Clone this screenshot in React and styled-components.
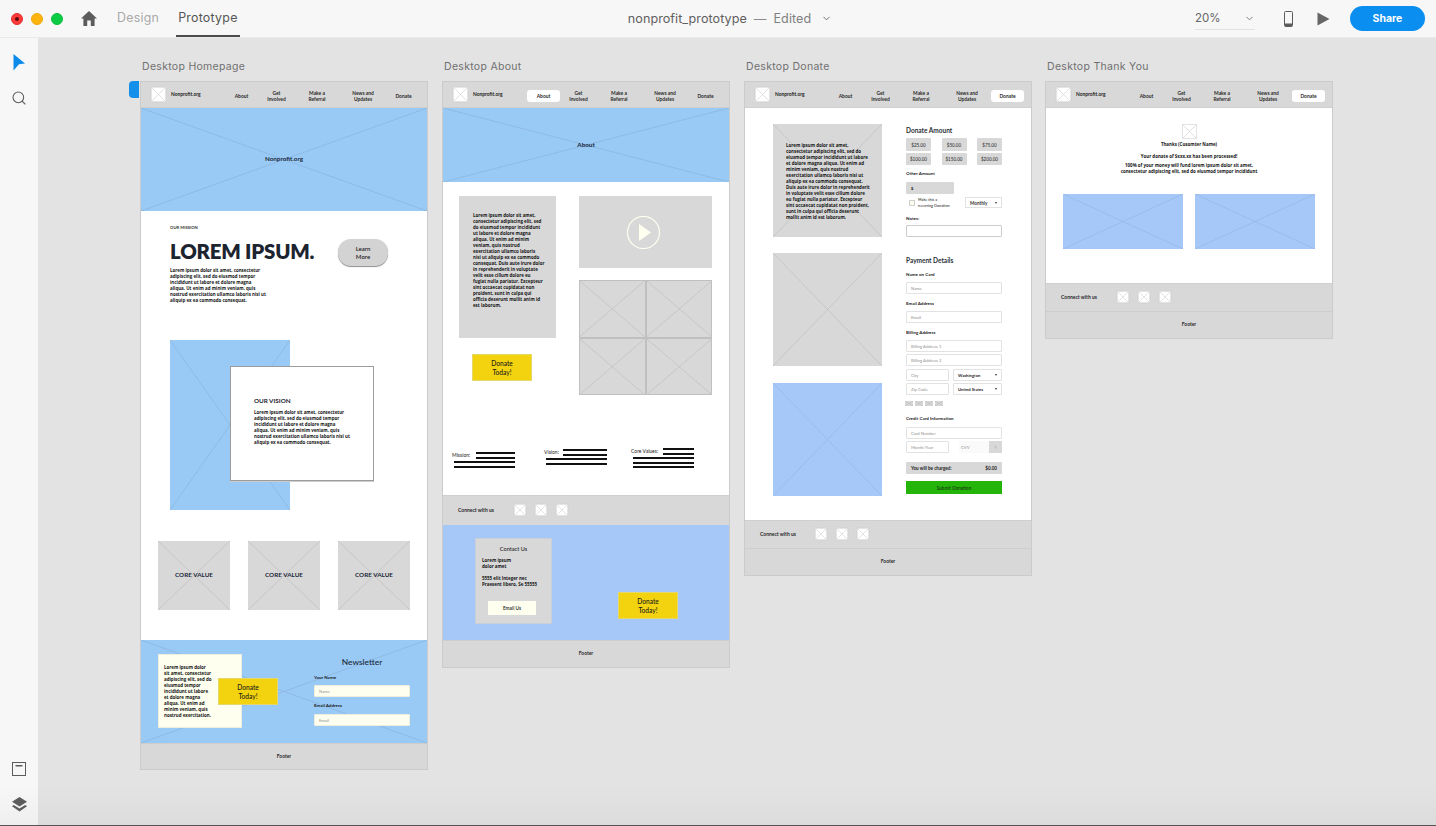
import styled, { createGlobalStyle } from "styled-components"
import { ChevronDown, Search } from "lucide-react"

const GlobalStyle = createGlobalStyle`
    html, body {
        margin: 0;
        padding: 0;
        background: #e3e3e3;
        overflow: hidden;
    }
    * {
        box-sizing: border-box;
    }
`;

const LOREM_BODY = "\"Open Sans\", \"Liberation Sans\", sans-serif";
const WIRE_FONT = "Lato, \"Open Sans\", sans-serif";
const UI_FONT = "Inter, \"Noto Sans\", sans-serif";

const SKY = "#99c9f5";
const PERIWINKLE = "#a6c8f8";
const GREY = "#d8d8d8";
const CREAM = "#fffff0";
const SKY_LINE = "#8ab4dc";
const PERI_LINE = "#96b6e0";
const THUMB_LINE = "#d5d5d5";

const Page = styled.div`
    width: 1436px;
    height: 826px;
    display: grid;
    grid-template-columns: 38px 1fr;
    grid-template-rows: 38px 1fr;
    font-family: ${WIRE_FONT};
    border-bottom: 1px solid #555;
    overflow: hidden;
`;

/* top bar */
const TopBar = styled.header`
    grid-column: 1 / 3;
    display: grid;
    grid-template-columns: 1fr auto 1fr;
    align-items: center;
    background: #f7f7f7;
    font-family: ${UI_FONT};
    border-bottom: 1px solid #e9e9e9;
`;
const TopLeft = styled.div`
    display: flex;
    align-items: center;
    height: 100%;
    padding-left: 11px;
`;
const Dot = styled.span`
    width: 12px;
    height: 12px;
    border-radius: 50%;
    margin-right: 8px;
    background: ${(p) => p.$color};
    border: 1px solid ${(p) => p.$edge};
    display: flex;
    align-items: center;
    justify-content: center;
`;
const DotCore = styled.span`
    width: 4px;
    height: 4px;
    border-radius: 50%;
    background: #5a0a0a;
`;
const HomeIcon = styled.svg`
    width: 16px;
    height: 15px;
    margin-left: 10px;
    fill: #5c5c5c;
`;
const Tab = styled.div`
    height: 100%;
    display: flex;
    align-items: center;
    font-size: 12.4px;
    letter-spacing: 0.25px;
    padding: 0 2px;
    color: ${(p) => (p.$active ? "#555" : "#a9a9a9")};
    margin-left: ${(p) => p.$ml}px;
    border-bottom: 2px solid ${(p) => (p.$active ? "#4b4b4b" : "transparent")};
`;
const DocTitle = styled.div`
    display: flex;
    align-items: center;
    font-size: 12.6px;
    letter-spacing: 0.05px;
    color: #5f5f5f;
    margin-left: 24px;
    white-space: nowrap;
`;
const DocDash = styled.span`
    margin: 0 7px;
    color: #8a8a8a;
`;
const DocState = styled.span`
    color: #808080;
    margin-right: 10px;
`;
const TopRight = styled.div`
    display: flex;
    align-items: center;
    justify-content: flex-end;
    padding-right: 11px;
`;
const ZoomSelect = styled.div`
    width: 60px;
    height: 23px;
    margin-right: 28px;
    display: flex;
    align-items: center;
    justify-content: space-between;
    font-size: 11.5px;
    color: #666;
    border-bottom: 1px solid #e2e2e2;
`;
const PhoneIcon = styled.svg`
    width: 11px;
    height: 16px;
    margin-right: 23px;
`;
const PlayIcon = styled.svg`
    width: 13px;
    height: 14px;
    margin-right: 20px;
    fill: #666;
`;
const ShareButton = styled.button`
    width: 75px;
    height: 25px;
    border: none;
    border-radius: 13px;
    background: #0a8ef0;
    color: #fff;
    font-family: ${UI_FONT};
    font-size: 10.5px;
    font-weight: 700;
`;

/* side rail */
const Rail = styled.aside`
    display: flex;
    flex-direction: column;
    align-items: center;
    background: linear-gradient(#f7f7f7 95%, #efefef);
    padding-top: 16px;
    padding-bottom: 13px;
`;
const RailGap = styled.div`
    flex: 1;
`;
const RailIcon = styled.svg`
    display: block;
    margin-top: ${(p) => p.$mt || 0}px;
`;

/* canvas */
const Canvas = styled.main`
    display: flex;
    align-items: flex-start;
    gap: 14px;
    padding: 22px 0 0 102px;
    background: linear-gradient(#e3e3e3 95%, #dcdcdc);
    overflow: hidden;
`;
const BoardColumn = styled.section`
    position: relative;
    width: 288px;
    flex: none;
    margin-left: ${(p) => p.$shift || 0}px;
`;
const BoardTitle = styled.div`
    height: 13px;
    line-height: 13px;
    margin-bottom: 8px;
    padding-left: 2px;
    font-family: ${UI_FONT};
    font-size: 10.5px;
    letter-spacing: 0.3px;
    color: #707070;
    white-space: nowrap;
`;
const Board = styled.div`
    display: flex;
    flex-direction: column;
    border: 1px solid #cbcbcb;
    background: #fff;
`;
const SelectTab = styled.div`
    position: absolute;
    left: -11px;
    top: 21px;
    width: 10px;
    height: 17px;
    background: #1590ea;
    border-radius: 4px 0 0 4px;
`;

/* wireframe shared */
const Frame = styled.div`
    position: relative;
    flex: none;
    overflow: hidden;
    width: ${(p) => (p.$w ? `${p.$w}px` : "auto")};
    height: ${(p) => p.$h}px;
    background: ${(p) => p.$bg || GREY};
    margin-top: ${(p) => p.$mt || 0}px;
`;
const CrossSvg = styled.svg`
    position: absolute;
    inset: 0;
    width: 100%;
    height: 100%;
    pointer-events: none;
`;
function Cross({ color = "#c0c0c0" }) {
    return (
        <CrossSvg viewBox="0 0 100 100" preserveAspectRatio="none">
            <line x1="0" y1="0" x2="100" y2="100" stroke={color} strokeWidth="0.7" vectorEffect="non-scaling-stroke" />
            <line x1="100" y1="0" x2="0" y2="100" stroke={color} strokeWidth="0.7" vectorEffect="non-scaling-stroke" />
        </CrossSvg>
    );
}
const Thumb = styled.div`
    position: relative;
    flex: none;
    width: ${(p) => p.$size || 12}px;
    height: ${(p) => p.$size || 12}px;
    background: #fff;
    border: 1px solid #e4e4e4;
    border-radius: 1px;
    box-shadow: 0 0 1px rgba(0, 0, 0, 0.15);
`;
const Copy = styled.p`
    position: relative;
    margin: ${(p) => p.$mt || 0}px 0 0;
    font-family: ${LOREM_BODY};
    font-size: 4.45px;
    line-height: 6px;
    font-weight: 700;
    color: #151515;
    white-space: nowrap;
    text-align: ${(p) => p.$align || "left"};
`;
const YellowButton = styled.div`
    position: ${(p) => (p.$over ? "absolute" : "relative")};
    left: ${(p) => (p.$over ? "59px" : "auto")};
    top: ${(p) => (p.$over ? "23px" : "auto")};
    flex: none;
    width: 60px;
    height: 27px;
    display: flex;
    align-items: center;
    justify-content: center;
    text-align: center;
    background: #f3d20f;
    border: 1px solid #e5d86b;
    font-size: 6.6px;
    line-height: 8.3px;
    font-weight: 500;
    color: #1a1a1a;
    margin: ${(p) => p.$margin || "0"};
`;

/* nav */
const Nav = styled.nav`
    display: flex;
    align-items: center;
    height: 26px;
    padding-left: 10px;
    background: ${GREY};
    border-bottom: 1px solid #cfcfcf;
`;
const Brand = styled.div`
    width: 54px;
    margin-left: 5px;
    margin-top: -2px;
    font-size: 4.9px;
    font-weight: 700;
    color: #222;
`;
const NavLink = styled.div`
    flex: none;
    width: ${(p) => p.$w}px;
    height: 12px;
    margin-top: 2px;
    display: flex;
    align-items: center;
    justify-content: center;
    text-align: center;
    font-size: 4.9px;
    line-height: 6px;
    font-weight: 700;
    color: #2a2a2a;
    background: ${(p) => (p.$active ? "#fff" : "transparent")};
    border-radius: 3px;
`;
const links = [
    { key: "about", w: 33, label: "About" },
    { key: "involved", w: 37, label: <>Get<br />Involved</> },
    { key: "referral", w: 44, label: <>Make a<br />Referral</> },
    { key: "news", w: 48, label: <>News and<br />Updates</> },
    { key: "donate", w: 33, label: "Donate" },
];
function TopNav({ active }) {
    return (
        <Nav>
            <Thumb $size={15}><Cross color={THUMB_LINE} /></Thumb>
            <Brand>Nonprofit.org</Brand>
            {links.map((l) => (
                <NavLink key={l.key} $w={l.w} $active={active === l.key}>
                    <span>{l.label}</span>
                </NavLink>
            ))}
        </Nav>
    );
}
const HeroText = styled.div`
    position: absolute;
    inset: 0 0 2px 0;
    display: flex;
    align-items: center;
    justify-content: center;
    font-size: 6.3px;
    font-weight: 700;
    color: #1b2a3a;
`;
const FooterBar = styled.footer`
    height: ${(p) => p.$h || 26}px;
    padding-bottom: 2px;
    display: flex;
    align-items: center;
    justify-content: center;
    background: ${GREY};
    border-top: 1px solid #cdcdcd;
    font-size: 4.9px;
    font-weight: 700;
    color: #2a2a2a;
`;
const ConnectBar = styled.div`
    display: flex;
    align-items: center;
    height: ${(p) => p.$h}px;
    padding: 0 0 1px 15px;
    background: ${GREY};
    border-top: 1px solid #cfcfcf;
`;
const ConnectLabel = styled.div`
    width: ${(p) => p.$w || 56}px;
    font-size: 5px;
    font-weight: 700;
    color: #2a2a2a;
`;
const ConnectIcons = styled.div`
    display: flex;
    gap: 9px;
`;
function Connect({ h, w }) {
    return (
        <ConnectBar $h={h}>
            <ConnectLabel $w={w}>Connect with us</ConnectLabel>
            <ConnectIcons>
                <Thumb><Cross color={THUMB_LINE} /></Thumb>
                <Thumb><Cross color={THUMB_LINE} /></Thumb>
                <Thumb><Cross color={THUMB_LINE} /></Thumb>
            </ConnectIcons>
        </ConnectBar>
    );
}

/* homepage */
const Mission = styled.div`
    padding: 14px 0 0 29px;
    height: 93px;
`;
const Eyebrow = styled.div`
    font-size: 4.2px;
    line-height: 6px;
    font-weight: 700;
    color: #333;
`;
const TitleRow = styled.div`
    display: flex;
    align-items: center;
    margin-top: 8px;
    height: 27px;
`;
const BigTitle = styled.h1`
    width: 168px;
    margin: -4px 0 0;
    font-size: 20.4px;
    line-height: 26px;
    font-weight: 800;
    letter-spacing: -0.2px;
    color: #1c2430;
    white-space: nowrap;
`;
const LearnButton = styled.div`
    width: 50px;
    height: 27px;
    display: flex;
    align-items: center;
    justify-content: center;
    text-align: center;
    border-radius: 13px;
    background: #d3d3d3;
    box-shadow: 0 1px 1px #8f8f8f;
    font-size: 6px;
    line-height: 8px;
    font-weight: 600;
    color: #222;
`;
const VisionBlock = styled.div`
    position: relative;
    width: 120px;
    margin: 36px 0 0 29px;
`;
const VisionCard = styled.div`
    position: absolute;
    left: 60px;
    top: 26px;
    width: 144px;
    height: 115px;
    padding: 30px 0 0 23px;
    background: #fff;
    border: 1px solid #9c9c9c;
    box-shadow: 0 1px 0 #ccc;
`;
const VisionTitle = styled.div`
    font-size: 6.3px;
    line-height: 8px;
    font-weight: 700;
    color: #1c2430;
`;
const CoreRow = styled.div`
    display: flex;
    gap: 18px;
    margin: 31px 0 30px;
    padding-left: 17px;
`;
const Newsletter = styled.div`
    display: flex;
    align-items: flex-start;
    padding: 14px 0 0 17px;
    height: 103px;
`;
const CreamCard = styled.div`
    position: relative;
    width: 84px;
    height: 74px;
    padding: 9px 0 0 5px;
    background: ${CREAM};
    border: 1px solid #eeeede;
`;
const FormColumn = styled.div`
    position: relative;
    width: 96px;
    margin-left: 72px;
`;
const NewsTitle = styled.div`
    height: 16px;
    line-height: 16px;
    text-align: center;
    font-size: 8.4px;
    font-weight: 500;
    color: #1b2a3a;
`;
const FieldLabel = styled.div`
    margin-top: ${(p) => p.$mt || 0}px;
    height: 6px;
    line-height: 7.5px;
    font-size: 4.5px;
    font-weight: 700;
    color: #1b1b1b;
    white-space: nowrap;
`;
const Input = styled.div`
    width: ${(p) => (p.$w ? `${p.$w}px` : "100%")};
    height: 12px;
    margin-top: ${(p) => p.$mt || 0}px;
    padding-left: 4px;
    display: flex;
    align-items: center;
    justify-content: ${(p) => (p.$select ? "space-between" : "flex-start")};
    background: ${(p) => p.$bg || "#fff"};
    border: 1px solid ${(p) => p.$edge || "#e2e2e2"};
    border-radius: 1px;
    font-size: 4.2px;
    font-weight: ${(p) => (p.$select ? 700 : 400)};
    color: ${(p) => (p.$select ? "#222" : "#8f8f8f")};
    white-space: nowrap;
`;
const Caret = styled.span`
    width: 0;
    height: 0;
    margin-right: 4px;
    border-left: 1.5px solid transparent;
    border-right: 1.5px solid transparent;
    border-top: 2px solid #333;
`;

/* about */
const AboutColumns = styled.div`
    display: flex;
    padding: 14px 0 0 16px;
`;
const AboutLeft = styled.div`
    width: 97px;
`;
const AboutRight = styled.div`
    width: 133px;
    margin-left: 23px;
`;
const TextPanel = styled.div`
    height: 142px;
    padding: 16px 0 0 14px;
    background: ${GREY};
`;
const PlayBadge = styled.svg`
    position: absolute;
    left: 47px;
    top: 20px;
    width: 35px;
    height: 33px;
`;
const QuadGrid = styled.div`
    display: grid;
    grid-template-columns: 1fr 1fr;
    grid-template-rows: 1fr 1fr;
    height: 115px;
    margin-top: 12px;
`;
const QuadCell = styled.div`
    position: relative;
    background: ${GREY};
    border: 0.5px solid #c0c0c0;
`;
const StatementRow = styled.div`
    display: flex;
    height: 47px;
    padding-left: 11px;
    margin-top: 53px;
`;
const Statement = styled.div`
    width: 61px;
    margin-left: ${(p) => p.$ml || 0}px;
    margin-top: ${(p) => p.$top || 0}px;
    display: flex;
    flex-direction: column;
    gap: 2.5px;
`;
const StatementHead = styled.div`
    display: flex;
    justify-content: space-between;
`;
const StatementLabel = styled.div`
    margin-left: -2px;
    font-size: 5px;
    line-height: 6px;
    font-weight: 500;
    color: #333;
    white-space: nowrap;
`;
const BarStack = styled.div`
    display: flex;
    flex-direction: column;
    gap: 2.5px;
    width: ${(p) => p.$w}px;
`;
const Bar = styled.div`
    height: 2px;
    background: #111;
`;
const ContactBand = styled.div`
    display: flex;
    align-items: flex-start;
    height: 115px;
    padding: 13px 0 0 32px;
    background: ${PERIWINKLE};
`;
const ContactCard = styled.div`
    width: 77px;
    height: 86px;
    padding: 6px 0 0 6px;
    background: ${GREY};
    border: 1px solid #c8cfd8;
`;
const ContactTitle = styled.div`
    margin-left: -6px;
    text-align: center;
    font-size: 5.6px;
    line-height: 8px;
    font-weight: 600;
    color: #333;
`;
const EmailButton = styled.div`
    width: 48px;
    height: 14px;
    margin: 14px 0 0 6px;
    display: flex;
    align-items: center;
    justify-content: center;
    background: ${CREAM};
    font-size: 4.8px;
    font-weight: 600;
    color: #222;
`;

/* donate */
const DonateBody = styled.div`
    display: flex;
    height: 412px;
    padding: 16px 0 0 28px;
`;
const DonateLeft = styled.div`
    width: 109px;
    display: flex;
    flex-direction: column;
`;
const DonateRight = styled.div`
    width: 96px;
    margin-left: 24px;
`;
const PanelText = styled.div`
    position: relative;
    padding: 18px 0 0 13px;
`;
const FormHeading = styled.div`
    height: 12px;
    line-height: 14px;
    margin-top: ${(p) => p.$mt || 0}px;
    font-size: 6.5px;
    font-weight: 700;
    color: #2a3038;
`;
const AmountGrid = styled.div`
    display: grid;
    grid-template-columns: repeat(3, 25px);
    grid-template-rows: 13px 12px;
    justify-content: space-between;
    row-gap: 2px;
    margin-top: 2px;
`;
const Amount = styled.div`
    display: flex;
    align-items: center;
    justify-content: center;
    background: ${GREY};
    border-radius: 1px;
    font-size: 4.6px;
    font-weight: 500;
    color: #333;
`;
const RecurringRow = styled.div`
    display: flex;
    align-items: center;
    height: 11px;
    margin-top: 3px;
`;
const Checkbox = styled.span`
    width: 6px;
    height: 6px;
    margin: 0 3px;
    background: ${CREAM};
    border: 1px solid #cfcfcf;
`;
const RecurringText = styled.div`
    font-size: 3.8px;
    line-height: 5.5px;
    font-weight: 500;
    color: #333;
    white-space: nowrap;
`;
const MiniSelect = styled.div`
    width: 37px;
    height: 11px;
    margin-left: auto;
    padding-left: 4px;
    display: flex;
    align-items: center;
    justify-content: space-between;
    border: 1px solid #e2e2e2;
    font-size: 4.6px;
    font-weight: 700;
    color: #333;
`;
const TextArea = styled.div`
    position: relative;
    height: 12px;
    margin-top: 4px;
    border: 1px solid #cdcdcd;
    border-radius: 1px;
`;
const FieldPair = styled.div`
    display: flex;
    justify-content: space-between;
    margin-top: ${(p) => p.$mt}px;
`;
const CardRow = styled.div`
    display: flex;
    gap: 2px;
    margin: 6px 0 0 -1px;
`;
const CardChip = styled.div`
    position: relative;
    width: 8px;
    height: 5px;
    background: ${GREY};
`;
const CvvField = styled.div`
    display: flex;
    width: 43px;
    height: 12px;
    font-size: 4.2px;
    color: #8f8f8f;
    background: #fafafa;
`;
const CvvText = styled.div`
    flex: 1;
    padding-left: 2px;
    display: flex;
    align-items: center;
`;
const CvvHint = styled.div`
    width: 13px;
    display: flex;
    align-items: center;
    justify-content: center;
    background: ${GREY};
`;
const ChargeBar = styled.div`
    height: 12px;
    margin-top: 9px;
    padding: 0 5px;
    display: flex;
    align-items: center;
    justify-content: space-between;
    background: ${GREY};
    font-size: 4.6px;
    font-weight: 700;
    color: #222;
`;
const SubmitButton = styled.div`
    height: 13px;
    margin-top: 7px;
    display: flex;
    align-items: center;
    justify-content: center;
    background: #25b50a;
    font-size: 4.6px;
    font-weight: 600;
    color: #163a10;
`;

/* thank you */
const ThanksBody = styled.div`
    display: flex;
    flex-direction: column;
    align-items: center;
    height: 175px;
    padding-top: 16px;
`;
const ThanksPhotos = styled.div`
    display: flex;
    gap: 12px;
    margin-top: 20px;
`;

export default function App() {
    return (
        <Page>
            <GlobalStyle />
            <TopBar>
                <TopLeft>
                    <Dot $color="#fc3a3a" $edge="#e0302f"><DotCore /></Dot>
                    <Dot $color="#fdb40f" $edge="#f0a90a" />
                    <Dot $color="#0ccc45" $edge="#0bbd40" />
                    <HomeIcon viewBox="0 0 16 15">
                        <path d="M8 0 L16 7.4 H13.6 V15 H9.8 V9.6 H6.2 V15 H2.4 V7.4 H0 Z" />
                    </HomeIcon>
                    <Tab $ml={18}>Design</Tab>
                    <Tab $ml={15} $active>Prototype</Tab>
                </TopLeft>
                <DocTitle>
                    nonprofit_prototype
                    <DocDash>—</DocDash>
                    <DocState>Edited</DocState>
                    <ChevronDown size={11} color="#666" strokeWidth={2} />
                </DocTitle>
                <TopRight>
                    <ZoomSelect>
                        20%
                        <ChevronDown size={11} color="#777" strokeWidth={2} />
                    </ZoomSelect>
                    <PhoneIcon viewBox="0 0 11 16" fill="none">
                        <rect x="1.5" y="0.5" width="8" height="15" rx="1" stroke="#5c5c5c" />
                        <rect x="2" y="12.5" width="7" height="3" fill="#5c5c5c" />
                    </PhoneIcon>
                    <PlayIcon viewBox="0 0 13 14">
                        <path d="M0.5 0.5 L12.5 7 L0.5 13.5 Z" />
                    </PlayIcon>
                    <ShareButton>Share</ShareButton>
                </TopRight>
            </TopBar>

            <Rail>
                <RailIcon width="12" height="17" viewBox="0 0 12 17">
                    <path d="M0.5 0 L12 9.5 L6 10.3 L0.5 16.5 Z" fill="#0d8bea" />
                </RailIcon>
                <RailIcon as={Search} size={16} color="#5c5c5c" strokeWidth={1.6} $mt={19} />
                <RailGap />
                <RailIcon width="15" height="14" viewBox="0 0 15 14" fill="none">
                    <rect x="0.5" y="0.5" width="13" height="13" stroke="#5c5c5c" />
                    <rect x="3.5" y="3" width="7" height="1.5" fill="#5c5c5c" />
                </RailIcon>
                <RailIcon width="15" height="15" viewBox="0 0 15 15" $mt={21}>
                    <path d="M7.5 0 L15 4.8 L7.5 9.6 L0 4.8 Z" fill="#5c5c5c" />
                    <path d="M1.7 8 L7.5 11.6 L13.3 8 L15 9.2 L7.5 14.6 L0 9.2 Z" fill="#5c5c5c" />
                </RailIcon>
            </Rail>

            <Canvas>
                <BoardColumn>
                    <BoardTitle>Desktop Homepage</BoardTitle>
                    <SelectTab />
                    <Board>
                        <TopNav />
                        <Frame $h={103} $bg={SKY}>
                            <Cross color={SKY_LINE} />
                            <HeroText>Nonprofit.org</HeroText>
                        </Frame>
                        <Mission>
                            <Eyebrow>OUR MISSION</Eyebrow>
                            <TitleRow>
                                <BigTitle>LOREM IPSUM.</BigTitle>
                                <LearnButton>Learn<br />More</LearnButton>
                            </TitleRow>
                            <Copy $mt={1}>
                                Lorem ipsum dolor sit amet, consectetur<br />
                                adipiscing elit, sed do eiusmod tempor<br />
                                incididunt ut labore et dolore magna<br />
                                aliqua. Ut enim ad minim veniam, quis<br />
                                nostrud exercitation ullamco laboris nisi ut<br />
                                aliquip ex ea commodo consequat.
                            </Copy>
                        </Mission>
                        <VisionBlock>
                            <Frame $h={170} $bg={SKY}><Cross color={SKY_LINE} /></Frame>
                            <VisionCard>
                                <VisionTitle>OUR VISION</VisionTitle>
                                <Copy $mt={4}>
                                    Lorem ipsum dolor sit amet, consectetur<br />
                                    adipiscing elit, sed do eiusmod tempor<br />
                                    incididunt ut labore et dolore magna<br />
                                    aliqua. Ut enim ad minim veniam, quis<br />
                                    nostrud exercitation ullamco laboris nisi ut<br />
                                    aliquip ex ea commodo consequat.
                                </Copy>
                            </VisionCard>
                        </VisionBlock>
                        <CoreRow>
                            {["one", "two", "three"].map((k) => (
                                <Frame key={k} $w={72} $h={69}>
                                    <Cross />
                                    <HeroText>CORE VALUE</HeroText>
                                </Frame>
                            ))}
                        </CoreRow>
                        <Frame $h={103} $bg={SKY}>
                            <Cross color={SKY_LINE} />
                            <Newsletter>
                                <CreamCard>
                                    <Copy>
                                        Lorem ipsum dolor<br />
                                        sit amet, consectetur<br />
                                        adipiscing elit, sed do<br />
                                        eiusmod tempor<br />
                                        incididunt ut labore<br />
                                        et dolore magna<br />
                                        aliqua. Ut enim ad<br />
                                        minim veniam, quis<br />
                                        nostrud exercitation.
                                    </Copy>
                                    <YellowButton $over>Donate<br />Today!</YellowButton>
                                </CreamCard>
                                <FormColumn>
                                    <NewsTitle>Newsletter</NewsTitle>
                                    <FieldLabel $mt={4}>Your Name</FieldLabel>
                                    <Input $mt={5} $bg={CREAM} $edge="#eeeede">Name</Input>
                                    <FieldLabel $mt={5}>Email Address</FieldLabel>
                                    <Input $mt={6} $bg={CREAM} $edge="#eeeede">Email</Input>
                                </FormColumn>
                            </Newsletter>
                        </Frame>
                        <FooterBar>Footer</FooterBar>
                    </Board>
                </BoardColumn>

                <BoardColumn>
                    <BoardTitle>Desktop About</BoardTitle>
                    <Board>
                        <TopNav active="about" />
                        <Frame $h={74} $bg={SKY}>
                            <Cross color={SKY_LINE} />
                            <HeroText>About</HeroText>
                        </Frame>
                        <AboutColumns>
                            <AboutLeft>
                                <TextPanel>
                                    <Copy>
                                        Lorem ipsum dolor sit amet,<br />
                                        consectetur adipiscing elit, sed<br />
                                        do eiusmod tempor incididunt<br />
                                        ut labore et dolore magna<br />
                                        aliqua. Ut enim ad minim<br />
                                        veniam, quis nostrud<br />
                                        exercitation ullamco laboris<br />
                                        nisi ut aliquip ex ea commodo<br />
                                        consequat. Duis aute irure dolor<br />
                                        in reprehenderit in voluptate<br />
                                        velit esse cillum dolore eu<br />
                                        fugiat nulla pariatur. Excepteur<br />
                                        sint occaecat cupidatat non<br />
                                        proident, sunt in culpa qui<br />
                                        officia deserunt mollit anim id<br />
                                        est laborum.
                                    </Copy>
                                </TextPanel>
                                <YellowButton $margin="16px 0 0 13px">Donate<br />Today!</YellowButton>
                            </AboutLeft>
                            <AboutRight>
                                <Frame $h={72}>
                                    <PlayBadge viewBox="0 0 35 33" fill="none">
                                        <circle cx="17.5" cy="16.5" r="16" stroke={CREAM} strokeWidth="1.2" />
                                        <path d="M13 8 L25 16.5 L13 25 Z" fill={CREAM} />
                                    </PlayBadge>
                                </Frame>
                                <QuadGrid>
                                    {[1, 2, 3, 4].map((n) => (
                                        <QuadCell key={n}><Cross /></QuadCell>
                                    ))}
                                </QuadGrid>
                            </AboutRight>
                        </AboutColumns>
                        <StatementRow>
                            <Statement $top={4}>
                                <StatementHead>
                                    <StatementLabel>Mission:</StatementLabel>
                                    <BarStack $w={39}><Bar /><Bar /></BarStack>
                                </StatementHead>
                                <Bar />
                                <Bar />
                            </Statement>
                            <Statement $ml={31} $top={1}>
                                <StatementHead>
                                    <StatementLabel>Vision:</StatementLabel>
                                    <BarStack $w={44}><Bar /><Bar /></BarStack>
                                </StatementHead>
                                <Bar />
                                <Bar />
                            </Statement>
                            <Statement $ml={26}>
                                <StatementHead>
                                    <StatementLabel>Core Values:</StatementLabel>
                                    <BarStack $w={31}><Bar /><Bar /></BarStack>
                                </StatementHead>
                                <Bar />
                                <Bar />
                                <Bar />
                            </Statement>
                        </StatementRow>
                        <Connect h={30} />
                        <ContactBand>
                            <ContactCard>
                                <ContactTitle>Contact Us</ContactTitle>
                                <Copy $mt={4}>Lorem ipsum<br />dolor amet</Copy>
                                <Copy $mt={6}>5555 elit Integer nec<br />Praesent libero, Se 55555</Copy>
                                <EmailButton>Email Us</EmailButton>
                            </ContactCard>
                            <YellowButton $margin="54px 0 0 66px">Donate<br />Today!</YellowButton>
                        </ContactBand>
                        <FooterBar $h={27}>Footer</FooterBar>
                    </Board>
                </BoardColumn>

                <BoardColumn>
                    <BoardTitle>Desktop Donate</BoardTitle>
                    <Board>
                        <TopNav active="donate" />
                        <DonateBody>
                            <DonateLeft>
                                <Frame $h={113}>
                                    <Cross />
                                    <PanelText>
                                        <Copy>
                                            Lorem ipsum dolor sit amet,<br />
                                            consectetur adipiscing elit, sed do<br />
                                            eiusmod tempor incididunt ut labore<br />
                                            et dolore magna aliqua. Ut enim ad<br />
                                            minim veniam, quis nostrud<br />
                                            exercitation ullamco laboris nisi ut<br />
                                            aliquip ex ea commodo consequat.<br />
                                            Duis aute irure dolor in reprehenderit<br />
                                            in voluptate velit esse cillum dolore<br />
                                            eu fugiat nulla pariatur. Excepteur<br />
                                            sint occaecat cupidatat non proident,<br />
                                            sunt in culpa qui officia deserunt<br />
                                            mollit anim id est laborum.
                                        </Copy>
                                    </PanelText>
                                </Frame>
                                <Frame $h={113} $mt={16}><Cross /></Frame>
                                <Frame $h={113} $mt={17} $bg={PERIWINKLE}><Cross color={PERI_LINE} /></Frame>
                            </DonateLeft>
                            <DonateRight>
                                <FormHeading>Donate Amount</FormHeading>
                                <AmountGrid>
                                    <Amount>$25.00</Amount>
                                    <Amount>$50.00</Amount>
                                    <Amount>$75.00</Amount>
                                    <Amount>$100.00</Amount>
                                    <Amount>$150.00</Amount>
                                    <Amount>$200.00</Amount>
                                </AmountGrid>
                                <FieldLabel $mt={5}>Other Amount</FieldLabel>
                                <Input $mt={6} $w={48} $bg={GREY} $edge={GREY} $select>$</Input>
                                <RecurringRow>
                                    <Checkbox />
                                    <RecurringText>Make this a<br />recurring Donation</RecurringText>
                                    <MiniSelect>Monthly<Caret /></MiniSelect>
                                </RecurringRow>
                                <FieldLabel $mt={7}>Notes:</FieldLabel>
                                <TextArea />
                                <FormHeading $mt={17}>Payment Details</FormHeading>
                                <FieldLabel $mt={5}>Name on Card</FieldLabel>
                                <Input $mt={5}>Name</Input>
                                <FieldLabel $mt={6}>Email Address</FieldLabel>
                                <Input $mt={5}>Email</Input>
                                <FieldLabel $mt={6}>Billing Address</FieldLabel>
                                <Input $mt={5}>Billing Address 1</Input>
                                <Input $mt={2}>Billing Address 2</Input>
                                <FieldPair $mt={3}>
                                    <Input $w={43}>City</Input>
                                    <Input $w={49} $select>Washington<Caret /></Input>
                                </FieldPair>
                                <FieldPair $mt={2}>
                                    <Input $w={43}>Zip Code</Input>
                                    <Input $w={49} $select>United States<Caret /></Input>
                                </FieldPair>
                                <CardRow>
                                    {[1, 2, 3, 4].map((n) => (
                                        <CardChip key={n}><Cross /></CardChip>
                                    ))}
                                </CardRow>
                                <FieldLabel $mt={9}>Credit Card Information</FieldLabel>
                                <Input $mt={6}>Card Number</Input>
                                <FieldPair $mt={2}>
                                    <Input $w={43}>Month/Year</Input>
                                    <CvvField>
                                        <CvvText>CVV</CvvText>
                                        <CvvHint>?</CvvHint>
                                    </CvvField>
                                </FieldPair>
                                <ChargeBar>
                                    <span>You will be charged:</span>
                                    <span>$0.00</span>
                                </ChargeBar>
                                <SubmitButton>Submit Donation</SubmitButton>
                            </DonateRight>
                        </DonateBody>
                        <Connect h={28} w={55} />
                        <FooterBar $h={27}>Footer</FooterBar>
                    </Board>
                </BoardColumn>

                <BoardColumn $shift={-1}>
                    <BoardTitle>Desktop Thank You</BoardTitle>
                    <Board>
                        <TopNav active="donate" />
                        <ThanksBody>
                            <Thumb $size={15}><Cross color={THUMB_LINE} /></Thumb>
                            <Copy $mt={2} $align="center">Thanks (Cusomter Name)</Copy>
                            <Copy $mt={6} $align="center">Your donate of $xxx.xx has been processed!</Copy>
                            <Copy $mt={3} $align="center">
                                100% of your money will fund lorem ipsum dolor sit amet,<br />
                                consectetur adipiscing elit, sed do eiusmod tempor incididunt
                            </Copy>
                            <ThanksPhotos>
                                <Frame $w={120} $h={55} $bg={PERIWINKLE}><Cross color={PERI_LINE} /></Frame>
                                <Frame $w={120} $h={55} $bg={PERIWINKLE}><Cross color={PERI_LINE} /></Frame>
                            </ThanksPhotos>
                        </ThanksBody>
                        <Connect h={28} />
                        <FooterBar $h={27}>Footer</FooterBar>
                    </Board>
                </BoardColumn>
            </Canvas>
        </Page>
    );
}
